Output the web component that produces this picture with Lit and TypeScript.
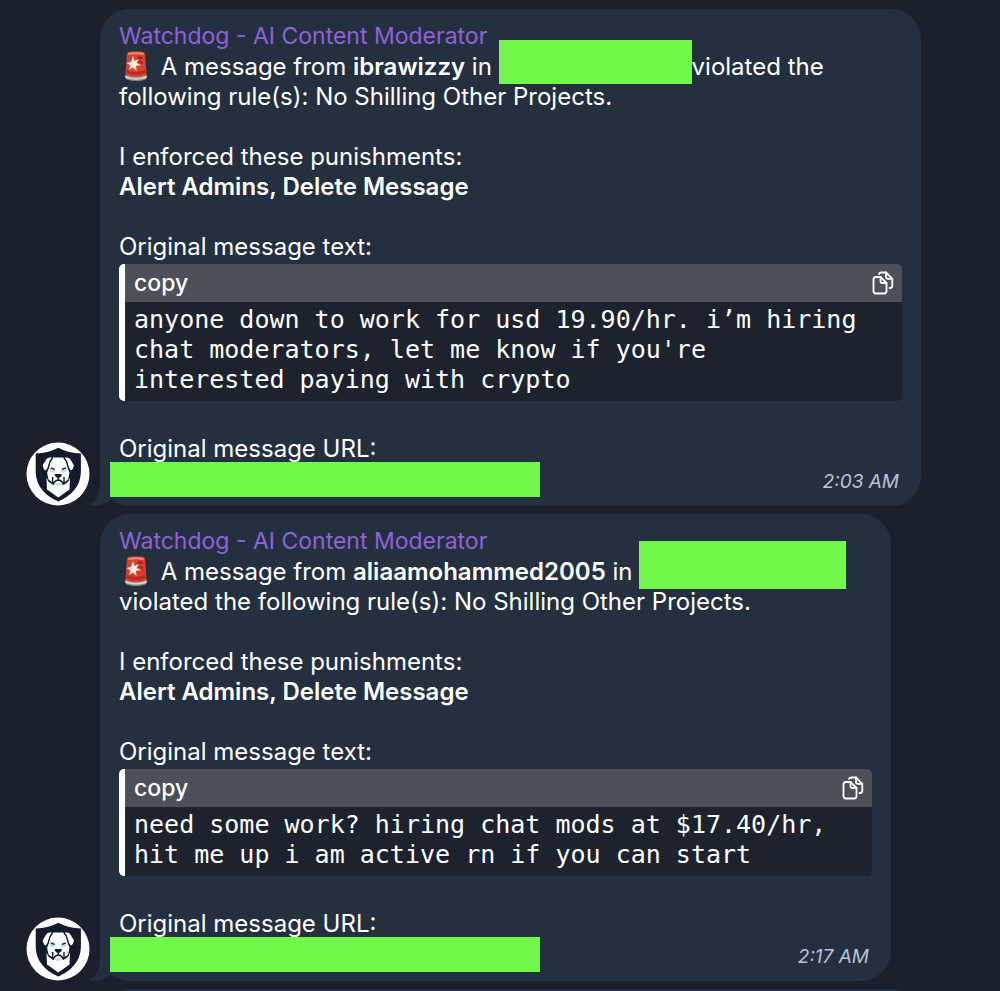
import { LitElement, html, css } from "lit";
import { customElement, property } from "lit/decorators.js";
import { styleMap } from "lit/directives/style-map.js";

interface Report {
  user: string;
  redacted: { width: number; height: number };
  text: string;
  time: string;
  maxWidth: number;
}

const REPORTS: Report[] = [
  {
    user: "ibrawizzy",
    redacted: { width: 193, height: 44 },
    text: "anyone down to work for usd 19.90/hr. i’m hiring chat moderators, let me know if you're interested paying with crypto",
    time: "2:03 AM",
    maxWidth: 821,
  },
  {
    user: "aliaamohammed2005",
    redacted: { width: 207, height: 48 },
    text: "need some work? hiring chat mods at $17.40/hr, hit me up i am active rn if you can start",
    time: "2:17 AM",
    maxWidth: 791,
  },
];

@customElement("dog-avatar")
class DogAvatar extends LitElement {
  static styles = css`
    :host { display: block; width: 64px; height: 64px; }
    svg { display: block; width: 100%; height: 100%; }
  `;
  render() {
    return html`<svg viewBox="0 0 64 64" role="img" aria-label="Watchdog">
      <circle cx="32" cy="32" r="31.5" fill="#fff" />
      <path d="M32.300 5.700C25 9.500 18 11 9.700 11.500V30C10 45 20 54 32.300 59.500C44.600 54 54.600 45 54.900 30V11.500C46.600 11 39.600 9.500 32.300 5.700Z" fill="#131a2a" />
      <path d="M20.500 36L23 40L27 43H37.600L41.600 40L44 36L43.500 47.500L32.300 55.500L21 47.500Z" fill="#fff" />
      <path d="M27 15.500H37.600Q41 20 41.800 25L43.500 31L42 38L38 42.500Q32.300 46 26.600 42.500L22.600 38L21.100 31L22.800 25Q23.600 20 27 15.500Z" fill="#f8fcfd" />
      <path d="M24 25Q28 24 30 27.500L28.500 30.500Q24.500 30.500 23.300 28Z M40.600 25Q36.600 24 34.600 27.500L36.100 30.500Q40.100 30.500 41.300 28Z M28 42Q32.300 39.500 36.600 42Q32.300 46 28 42Z" fill="#c6dde8" />
      <path d="M26 15.600Q21.500 14.800 20.200 17.500L16.700 23.300Q17.500 28 19.800 28.500Q22 26 22.400 23Q23.400 19 26 15.600Z M38.600 15.600Q43.100 14.800 44.400 17.500L47.900 23.300Q47.100 28 44.800 28.500Q42.600 26 42.200 23Q41.200 19 38.600 15.600Z" fill="#fff" />
      <path d="M26.800 15.500Q23.500 19 22.900 24Q22.300 27 20.500 29M37.800 15.500Q41.100 19 41.700 24Q42.300 27 44.100 29" fill="none" stroke="#131a2a" stroke-width="1.200" />
      <path d="M24.800 26L28.500 27.300M39.800 26L36.100 27.300" stroke="#131a2a" stroke-width="1.300" />
      <path d="M28.800 32H35.800Q36 35 32.300 36.300Q28.600 35 28.800 32Z" fill="#131a2a" />
      <path d="M32.300 36V38.500M32.300 38Q28.500 38.500 27.200 42.500M32.300 38Q36.100 38.500 37.400 42.500M26.600 35V41.500L22 38M38 35V41.500L42.600 38" fill="none" stroke="#131a2a" stroke-width="1.400" />
    </svg>`;
  }
}

@customElement("chat-report")
class ChatReport extends LitElement {
  @property({ attribute: false }) report?: Report;

  static styles = css`
    :host { display: grid; grid-template-columns: 64px minmax(0, 1fr); column-gap: 10px; align-items: end; }
    .bubble { position: relative; box-sizing: border-box; background: #242f3f; border-radius: 30px; padding: 11px 19px 9px; }
    .bubble.empty { grid-column: 2; height: 120px; }
    .tail { position: absolute; left: -11px; bottom: 0; width: 24px; height: 30px; }
    .name { margin: 0; font-size: 23px; line-height: 32px; font-weight: 400; color: #8f63d9; }
    p { margin: 0; }
    .siren { width: 24px; height: 30px; margin: -4px 6px -4px 5px; vertical-align: -2px; }
    .gap { margin-top: 30px; }
    .redacted { display: inline-block; background: #72f74b; margin: -25px 0 -9px; }
    strong { font-weight: 600; }
    .code { border-left: 6px solid #fff; border-radius: 5px; background: #1d232e; overflow: hidden; margin: 2px 0 33px; }
    .head { display: flex; justify-content: space-between; align-items: center; height: 38px; padding: 0 8px 0 9px; background: #4b5059; font-size: 23px; font-weight: 500; }
    .copy { display: block; padding: 0; border: 0; background: none; color: #fff; cursor: pointer; }
    .copy svg { display: block; width: 22px; height: 24px; }
    pre { margin: 0; padding: 3px 32px 6px 9px; white-space: pre-wrap; font: 25px/30px "DejaVu Sans Mono", monospace; }
    .foot { position: relative; display: flex; justify-content: space-between; align-items: center; margin: -2px 0 0 -9px; }
    .url { width: 430px; height: 35px; background: #72f74b; }
    time { font-size: 19px; line-height: 24px; font-style: italic; color: #b7c4d6; padding: 4px 3px 0 0; }
  `;

  render() {
    const r = this.report;
    if (!r) return html`<div class="bubble empty" style=${styleMap({ maxWidth: "821px" })}></div>`;
    return html`
      <dog-avatar></dog-avatar>
      <article class="bubble" style=${styleMap({ maxWidth: `${r.maxWidth}px` })}>
        <svg class="tail" viewBox="0 0 24 30" aria-hidden="true">
          <path d="M11 0V6C11 18 8 25 0 29C8 31 17 28 22 23V0Z" fill="#242f3f" />
        </svg>
        <h2 class="name">Watchdog - AI Content Moderator</h2>
        <p>
          <svg class="siren" viewBox="0 0 24 30" role="img" aria-label="Alert">
            <path d="M1 24Q0.500 27 2.500 28.500Q12 31.500 21.500 28.500Q23.500 27 23 24Z" fill="#8d8583" />
            <path d="M1.500 24.500Q12 29 22.500 24.500V27Q12 30.500 1.500 27Z" fill="#d5d0cc" />
            <path d="M4.500 1Q12 -0.300 19.500 1Q21 1.300 21.200 3L22.500 24Q12 28 1.500 24L2.800 3Q3 1.300 4.500 1Z" fill="#d8402e" />
            <path d="M4.500 2Q12 0.500 19.500 2L19.800 4Q12 2.500 4.200 4Z" fill="#f28b78" />
            <path d="M13 6Q18 3 19 8Q15 7 14 10Q19 9 19 13L15 12Z" fill="#9d2a20" />
            <path d="M3 19Q12 23 21 19L21.500 22Q12 26 2.500 22Z" fill="#b52d20" />
            <path d="M9 5L10.500 10L15 8L12.500 12L17 14L12 15L12.500 20L9 16.500L5 19L6.500 14.500L2.500 12L7 11Z" fill="#ffe9e2" />
          </svg>
          A message from <strong>${r.user}</strong> in
          <span class="redacted" style=${styleMap({ width: `${r.redacted.width}px`, height: `${r.redacted.height}px` })}></span>violated the following rule(s): No Shilling Other Projects.
        </p>
        <p class="gap">I enforced these punishments:<br /><strong>Alert Admins, Delete Message</strong></p>
        <p class="gap">Original message text:</p>
        <div class="code">
          <div class="head">
            <span>copy</span>
            <button class="copy" type="button" aria-label="Copy message text">
              <svg viewBox="0 0 22 24" fill="none" stroke="currentColor" stroke-width="1.800" stroke-linejoin="round" stroke-linecap="round">
                <path d="M4 6H8.500L14.500 12V20Q14.500 22.500 12 22.500H4Q1.500 22.500 1.500 20V8.500Q1.500 6 4 6Z" />
                <path d="M8.500 6V10Q8.500 12 10.500 12H14.500" />
                <path d="M7 3Q7.500 1.500 9.500 1.500H14L20.300 7.800V14.500Q20.300 17 18 17H17.500" />
                <path d="M14 1.500V5.800Q14 7.800 16 7.800H20.300" />
              </svg>
            </button>
          </div>
          <pre>${r.text}</pre>
        </div>
        <p>Original message URL:</p>
        <div class="foot"><div class="url"></div><time>${r.time}</time></div>
      </article>`;
  }
}

@customElement("app-root")
class AppRoot extends LitElement {
  static styles = css`
    :host { display: block; box-sizing: border-box; height: 100vh; overflow: hidden; background: #1b212c; color: #fff; font: 24px/30px Inter, "Liberation Sans", sans-serif; }
    main { display: flex; flex-direction: column; gap: 8px; padding: 9px 26px 0; }
  `;
  render() {
    return html`<main>${REPORTS.map((r) => html`<chat-report .report=${r}></chat-report>`)}<chat-report></chat-report></main>`;
  }
}
